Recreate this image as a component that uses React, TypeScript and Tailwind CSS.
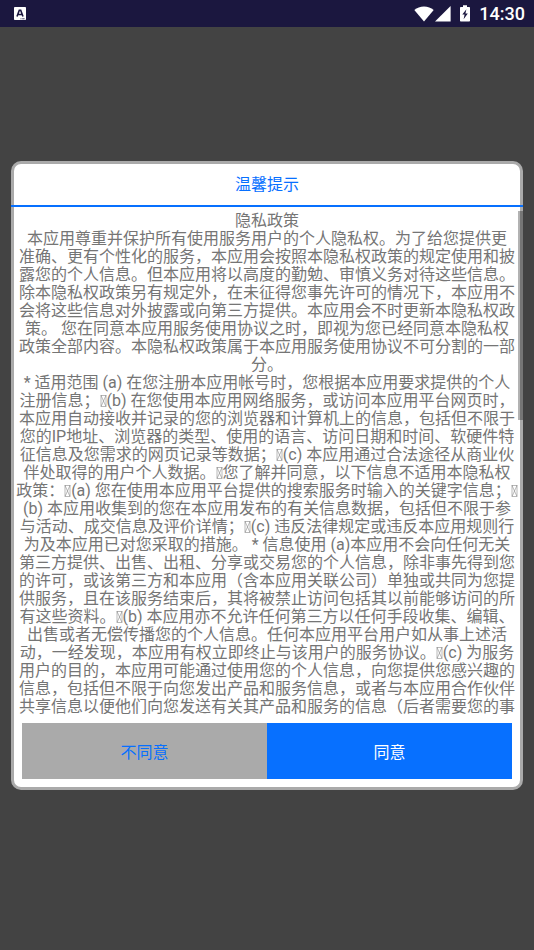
import React, { useState } from "react";

const policyLines = [
  "隐私政策",
  "本应用尊重并保护所有使用服务用户的个人隐私权。为了给您提供更",
  "准确、更有个性化的服务，本应用会按照本隐私权政策的规定使用和披",
  "露您的个人信息。但本应用将以高度的勤勉、审慎义务对待这些信息。",
  "除本隐私权政策另有规定外，在未征得您事先许可的情况下，本应用不",
  "会将这些信息对外披露或向第三方提供。本应用会不时更新本隐私权政",
  "策。 您在同意本应用服务使用协议之时，即视为您已经同意本隐私权",
  "政策全部内容。本隐私权政策属于本应用服务使用协议不可分割的一部",
  "分。",
  "* 适用范围 (a) 在您注册本应用帐号时，您根据本应用要求提供的个人",
  "注册信息；|(b) 在您使用本应用网络服务，或访问本应用平台网页时，",
  "本应用自动接收并记录的您的浏览器和计算机上的信息，包括但不限于",
  "您的IP地址、浏览器的类型、使用的语言、访问日期和时间、软硬件特",
  "征信息及您需求的网页记录等数据；|(c) 本应用通过合法途径从商业伙",
  "伴处取得的用户个人数据。|您了解并同意，以下信息不适用本隐私权",
  "政策：|(a) 您在使用本应用平台提供的搜索服务时输入的关键字信息；|",
  "(b) 本应用收集到的您在本应用发布的有关信息数据，包括但不限于参",
  "与活动、成交信息及评价详情；|(c) 违反法律规定或违反本应用规则行",
  "为及本应用已对您采取的措施。 * 信息使用 (a)本应用不会向任何无关",
  "第三方提供、出售、出租、分享或交易您的个人信息，除非事先得到您",
  "的许可，或该第三方和本应用（含本应用关联公司）单独或共同为您提",
  "供服务，且在该服务结束后，其将被禁止访问包括其以前能够访问的所",
  "有这些资料。|(b) 本应用亦不允许任何第三方以任何手段收集、编辑、",
  "出售或者无偿传播您的个人信息。任何本应用平台用户如从事上述活",
  "动，一经发现，本应用有权立即终止与该用户的服务协议。|(c) 为服务",
  "用户的目的，本应用可能通过使用您的个人信息，向您提供您感兴趣的",
  "信息，包括但不限于向您发出产品和服务信息，或者与本应用合作伙伴",
  "共享信息以便他们向您发送有关其产品和服务的信息（后者需要您的事",
];

// crossed box that stands where a control character was left in the text
function MissingGlyph() {
  return (
    <svg className="inline-block h-3 w-[7px] align-[-1px]" viewBox="0 0 7 12" fill="none" stroke="currentColor" strokeWidth="0.5" aria-hidden="true">
      <rect x="1" y="0.5" width="5" height="11" />
      <path d="M1 0.5L6 11.5M6 0.5L1 11.5" />
    </svg>
  );
}

function PolicyLine({ text }: { text: string }) {
  const parts = text.split("|");

  return (
    <p className="whitespace-nowrap">
      {parts.map((part, i) => (
        <React.Fragment key={i}>
          {i > 0 && <MissingGlyph />}
          {part}
        </React.Fragment>
      ))}
    </p>
  );
}

function StatusBar() {
  return (
    <header className="relative z-10 flex h-[27px] items-center justify-between bg-[#1b173f] pl-3.5 pr-[9px] text-white">
      <svg className="h-[13px] w-3" viewBox="0 0 12 13" aria-hidden="true">
        <rect width="12" height="13" rx="0.8" fill="#fff" />
        <path d="M3 9.5L5.3 3.2h1.4L9 9.5M4 7.5h4" fill="none" stroke="#1b173f" strokeWidth="1.6" />
        <path d="M6.5 11.8h1M8.2 11.8h2.4" stroke="#1b173f" strokeWidth="0.8" />
      </svg>
      <div className="flex items-center">
        <svg className="h-4 w-5" viewBox="0 0 20 16" fill="#fff" aria-hidden="true">
          <path d="M0.3 4.1C3 1.7 6.3 0.5 10 0.5s7 1.2 9.7 3.6L10 15.6z" />
        </svg>
        <svg className="ml-px h-4 w-4" viewBox="0 0 16 16" fill="#fff" aria-hidden="true">
          <path d="M0 15.6L15.6 0v15.6z" />
        </svg>
        <svg className="ml-2 h-[17px] w-3" viewBox="0 0 12 17" aria-hidden="true">
          <path d="M4 0.3h4v1.6h2.2q0.8 0 0.8 0.8v13q0 0.8-0.8 0.8H1.8q-0.8 0-0.8-0.8v-13q0-0.8 0.8-0.8H4z" fill="#fff" />
          <path d="M7.4 4.2L3.3 9.6h2.3L4.6 14.3L8.8 8.6H6.4z" fill="#1b173f" />
        </svg>
        <time className="ml-2 text-lg font-medium leading-6">14:30</time>
      </div>
    </header>
  );
}

export default function App() {
  const [open, setOpen] = useState(true);

  return (
    <div className="min-h-screen bg-[#434343] font-[Roboto,'Noto_Sans_CJK_SC',sans-serif]" lang="zh-CN">
      <StatusBar />
      {open && (
        <div className="fixed inset-0 flex items-center justify-center px-[11px] pt-px">
          <div
            role="dialog"
            aria-labelledby="dialog-title"
            className="relative w-full rounded-[10px] border-[3px] border-[#aaaaaa] bg-white pb-2"
          >
            <h1
              id="dialog-title"
              className="-mx-[3px] border-b-2 border-[#0770ff] pb-[7px] pt-2 text-center text-base leading-[26px] text-[#0770ff]"
            >
              温馨提示
            </h1>
            <div className="overflow-hidden pb-[7px] pt-[5px] text-center text-base leading-[18px] text-[#757575]">
              {policyLines.map((line, i) => (
                <PolicyLine key={i} text={line} />
              ))}
            </div>
            <div className="absolute -right-[3px] top-[47px] h-[209px] w-[5px] bg-black/30" />
            <div className="mx-2 grid grid-cols-2 text-base">
              <button onClick={() => setOpen(false)} className="h-14 bg-[#aaaaaa] pt-1 text-[#0770ff]">
                不同意
              </button>
              <button onClick={() => setOpen(false)} className="h-14 bg-[#0770ff] pt-1 text-white">
                同意
              </button>
            </div>
          </div>
        </div>
      )}
    </div>
  );
}
